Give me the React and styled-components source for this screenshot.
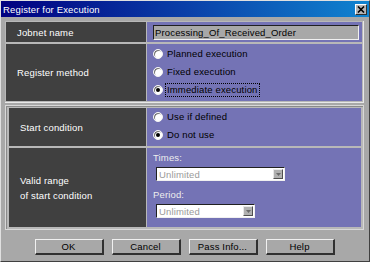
import React from "react";
import styled, { createGlobalStyle } from "styled-components";

const GlobalStyle = createGlobalStyle`
  html, body {
    margin: 0;
    padding: 0;
    background: #a8a8a8;
  }
  body {
    font-family: "Liberation Sans", Arial, sans-serif;
    font-size: 9.5px;
    letter-spacing: 0.15px;
  }
`;

function Radio({ checked, focused, children }) {
  return (
    <RadioRow>
      <RadioCircle checked={checked} />
      <RadioText focused={focused}>{children}</RadioText>
    </RadioRow>
  );
}

function Combo({ value, width }) {
  return (
    <ComboBox width={width}>
      <ComboValue>{value}</ComboValue>
      <ComboButton>
        <svg width="7" height="5" viewBox="0 0 7 5">
          <path d="M1 1h5L3.5 4z" fill="#6a6a6a" />
        </svg>
      </ComboButton>
    </ComboBox>
  );
}

export default function App() {
  return (
    <>
      <GlobalStyle />
      <Window>
        <TitleBar>
          <TitleText>Register for Execution</TitleText>
          <CloseButton>
            <svg width="8" height="7" viewBox="0 0 8 7">
              <path d="M1 0.5l6 6M7 0.5l-6 6" stroke="#000" strokeWidth="1.6" />
            </svg>
          </CloseButton>
        </TitleBar>

        <Body>
          <Group>
            <Row height={20}>
              <Label>Jobnet name</Label>
              <Value center>
                <NameField>Processing_Of_Received_Order</NameField>
              </Value>
            </Row>
            <Row height={57}>
              <Label>Register method</Label>
              <Value>
                <RadioList top={3}>
                  <Radio>Planned execution</Radio>
                  <Radio>Fixed execution</Radio>
                  <Radio checked focused>Immediate execution</Radio>
                </RadioList>
              </Value>
            </Row>
          </Group>

          <FramedGroup>
            <Row height={38}>
              <Label inset>Start condition</Label>
              <Value>
                <RadioList top={2}>
                  <Radio>Use if defined</Radio>
                  <Radio checked>Do not use</Radio>
                </RadioList>
              </Value>
            </Row>
            <Row height={79}>
              <Label inset>
                Valid range
                <br />
                of start condition
              </Label>
              <Value>
                <FieldStack>
                  <FieldCaption>Times:</FieldCaption>
                  <Combo value="Unlimited" width={129} />
                  <FieldCaption top>Period:</FieldCaption>
                  <Combo value="Unlimited" width={99} />
                </FieldStack>
              </Value>
            </Row>
          </FramedGroup>

          <ButtonBar>
            <Button>OK</Button>
            <Button>Cancel</Button>
            <Button>Pass Info...</Button>
            <Button>Help</Button>
          </ButtonBar>
        </Body>
      </Window>
    </>
  );
}

const Window = styled.div`
  width: 370px;
  height: 262px;
  box-sizing: border-box;
  background: #a8a8a8;
  border-left: 1px solid #e0e0e0;
  border-top: 1px solid #e0e0e0;
  border-right: 1px solid #404040;
  border-bottom: 1px solid #404040;
  display: flex;
  flex-direction: column;
`;

const TitleBar = styled.div`
  height: 16px;
  display: flex;
  align-items: center;
  justify-content: space-between;
  padding: 0 2px 0 2px;
  background: linear-gradient(to right, #000080 0%, #0a3fa8 50%, #1084d0 100%);
`;

const TitleText = styled.div`
  color: #ffffff;
  font-size: 9.5px;
`;

const CloseButton = styled.div`
  width: 12px;
  height: 11px;
  box-sizing: border-box;
  background: #b4b4b4;
  border-top: 1px solid #ffffff;
  border-left: 1px solid #ffffff;
  border-right: 1px solid #303030;
  border-bottom: 1px solid #303030;
  display: flex;
  align-items: center;
  justify-content: center;
`;

const Body = styled.div`
  padding: 4px 5px 0 4px;
  display: flex;
  flex-direction: column;
`;

const Group = styled.div`
  display: flex;
  flex-direction: column;
  gap: 2px;
  padding: 1px;
  background: #b8b8b8;
  border-right: 1px solid #e8e8e8;
  border-bottom: 1px solid #e8e8e8;
`;

const FramedGroup = styled.div`
  margin-top: 2px;
  display: flex;
  flex-direction: column;
  gap: 2px;
  padding: 2px 2px 2px 3px;
  background: #b8b8b8;
  border: 1px solid #d8d8d8;
  box-shadow: inset 1px 1px 0 #8a8a8a;
`;

const Row = styled.div`
  display: flex;
  gap: 1px;
  height: ${(p) => p.height}px;
`;

const Label = styled.div`
  width: ${(p) => (p.inset ? 137 : 140)}px;
  flex-shrink: 0;
  background: #404040;
  color: #ffffff;
  display: flex;
  align-items: center;
  padding-left: 11px;
  box-sizing: border-box;
  line-height: 15px;
`;

const Value = styled.div`
  flex: 1;
  background: #7473b5;
  display: flex;
  align-items: ${(p) => (p.center ? "center" : "flex-start")};
  padding-left: 6px;
`;

const NameField = styled.div`
  width: 206px;
  height: 15px;
  box-sizing: border-box;
  background: #a8a8a8;
  border-top: 1px solid #202020;
  border-left: 1px solid #202020;
  border-right: 1px solid #f0f0f0;
  border-bottom: 1px solid #f0f0f0;
  color: #000000;
  padding-left: 1px;
  line-height: 13px;
`;

const RadioList = styled.div`
  display: flex;
  flex-direction: column;
  gap: 4px;
  padding-top: ${(p) => p.top}px;
`;

const RadioRow = styled.div`
  display: flex;
  align-items: center;
  gap: 3px;
  height: 14px;
`;

const RadioCircle = styled.span`
  width: 10px;
  height: 10px;
  border-radius: 50%;
  box-sizing: border-box;
  background: #ffffff;
  border: 1px solid #f4f4f4;
  box-shadow: inset 1px 1px 0 #6a6a6a;
  position: relative;
  &::after {
    content: "";
    display: ${(p) => (p.checked ? "block" : "none")};
    position: absolute;
    left: 2px;
    top: 2px;
    width: 4px;
    height: 4px;
    border-radius: 50%;
    background: #000000;
  }
`;

const RadioText = styled.span`
  color: #000000;
  padding: 0 1px;
  outline: ${(p) => (p.focused ? "1px dotted #000" : "none")};
  line-height: 12px;
`;

const FieldStack = styled.div`
  display: flex;
  flex-direction: column;
  padding-top: 4px;
`;

const FieldCaption = styled.div`
  color: #eeeeee;
  line-height: 12px;
  margin-top: ${(p) => (p.top ? 8 : 0)}px;
  margin-bottom: 3px;
`;

const ComboBox = styled.div`
  width: ${(p) => p.width}px;
  height: 14px;
  margin-left: 3px;
  box-sizing: border-box;
  background: #ffffff;
  border-top: 1px solid #202020;
  border-left: 1px solid #202020;
  border-right: 1px solid #f0f0f0;
  border-bottom: 1px solid #f0f0f0;
  display: flex;
  align-items: center;
  justify-content: space-between;
`;

const ComboValue = styled.span`
  color: #9a9a9a;
  padding-left: 2px;
`;

const ComboButton = styled.span`
  width: 10px;
  height: 10px;
  margin-right: 1px;
  box-sizing: border-box;
  background: #b0b0b0;
  border-top: 1px solid #e8e8e8;
  border-left: 1px solid #e8e8e8;
  border-right: 1px solid #505050;
  border-bottom: 1px solid #505050;
  display: flex;
  align-items: center;
  justify-content: center;
`;

const ButtonBar = styled.div`
  display: flex;
  justify-content: center;
  gap: 8px;
  margin-top: 9px;
`;

const Button = styled.div`
  width: 69px;
  height: 16px;
  box-sizing: border-box;
  background: #a8a8a8;
  border-top: 1px solid #f0f0f0;
  border-left: 1px solid #f0f0f0;
  border-right: 2px solid #303030;
  border-bottom: 2px solid #303030;
  color: #000000;
  display: flex;
  align-items: center;
  justify-content: center;
`;
